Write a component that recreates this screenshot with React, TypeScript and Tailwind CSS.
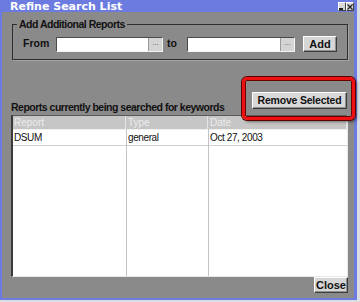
import React from "react";

const font = "font-['Liberation_Sans',Arial,sans-serif]";

function TitleButton({ kind }: { kind: "min" | "close" }) {
  return (
    <div className="w-[8px] h-[9px] bg-[#d8d8d8] border border-t-white border-l-white border-b-[#444] border-r-[#444] flex items-center justify-center">
      <svg width="6" height="6" viewBox="0 0 6 6">
        {kind === "min" ? (
          <rect x="0" y="4" width="4" height="2" fill="#222" />
        ) : (
          <path d="M0.5 0.5 L5.5 5.5 M5.5 0.5 L0.5 5.5" stroke="#222" strokeWidth="1.3" />
        )}
      </svg>
    </div>
  );
}

function Field({ w }: { w: string }) {
  return (
    <div className={`${w} h-[15px] bg-white border border-t-[#4a4a4a] border-l-[#4a4a4a] border-b-[#f4f4f4] border-r-[#f4f4f4] flex justify-end`}>
      <div className="w-[14px] h-full bg-[#d4d4d4] border-l border-[#9a9a9a] flex items-center justify-center text-[8px] leading-none text-[#555] pb-[2px]">
        ...
      </div>
    </div>
  );
}

function Btn({ label, w }: { label: string; w: string }) {
  return (
    <button className={`${w} h-[16px] bg-[#d6d6d6] border border-t-white border-l-white border-b-[#3c3c3c] border-r-[#3c3c3c] shadow-[inset_-1px_-1px_0_#909090] text-[11px] leading-none font-bold text-[#111] flex items-center justify-center`}>
      {label}
    </button>
  );
}

const columns = [
  { name: "Report", value: "DSUM", w: "w-[114px]" },
  { name: "Type", value: "general", w: "w-[82px]" },
  { name: "Date", value: "Oct 27, 2003", w: "flex-1" },
];

export default function App() {
  return (
    <div className={`w-[360px] h-[302px] bg-[#dcdce4] overflow-hidden ${font}`}>
      <div className="w-[357px] h-[300px] bg-[#6c7be0] pl-[2px] pr-[3px] pb-[2px] flex flex-col">
        {/* title bar */}
        <div className="h-[14px] flex items-center justify-between pl-[8px]">
          <span className="font-['DejaVu_Sans',sans-serif] text-[11px] leading-none font-bold text-white">
            Refine Search List
          </span>
          <div className="flex mt-[1px]">
            <TitleButton kind="min" />
            <TitleButton kind="close" />
          </div>
        </div>

        {/* body */}
        <div className="flex-1 bg-[#8b8a8b] flex flex-col pl-[9px] pr-[6px] pb-[5px]">
          <fieldset className="mt-[6px] ml-[1px] border border-[#2e2e2e] shadow-[1px_1px_0_#a4a4a4] pl-[10px] pt-[5px] pb-[7px]">
            <legend className="ml-[-6px] px-[2px] text-[10.5px] leading-[13px] font-bold tracking-[-0.5px] text-[#111]">
              Add Additional Reports
            </legend>
            <div className="flex items-center">
              <span className="w-[33px] text-[10.5px] font-bold text-[#111]">From</span>
              <Field w="w-[107px]" />
              <span className="w-[24px] pl-[4px] text-[10.5px] font-bold text-[#111]">to</span>
              <Field w="w-[108px]" />
              <div className="ml-[8px]">
                <Btn label="Add" w="w-[34px]" />
              </div>
            </div>
          </fieldset>

          <div className="mt-[27px] flex items-end justify-between">
            <span className="whitespace-nowrap text-[10.5px] leading-[13px] font-bold tracking-[-0.5px] text-[#111]">
              Reports currently being searched for keywords
            </span>
            <div className="relative mb-[3px] mr-[1px]">
              <button className="w-[95px] h-[17px] bg-[#d8d8d8] border border-t-white border-l-white border-b-[#3c3c3c] border-r-[#3c3c3c] shadow-[inset_-1px_-1px_0_#909090] text-[10.5px] tracking-[-0.2px] leading-none font-bold text-[#111]">
                Remove Selected
              </button>
              <div className="absolute z-10 left-[-10px] top-[-10px] right-[-8px] bottom-[-9px] rounded-[5px] border-[3px] border-[#ee1010] shadow-[0_0_0_1px_#5a0000,inset_0_0_0_1px_#6a0000,2px_2px_3px_rgba(0,0,0,0.45)] pointer-events-none" />
            </div>
          </div>

          {/* table */}
          <div className="mt-[1px] h-[162px] flex bg-white border-l-2 border-t border-b border-r border-l-[#3a3a3a] border-t-[#5a5a5a] border-b-[#e8e8e8] border-r-[#e8e8e8]">
            {columns.map((c, i) => (
              <div
                key={c.name}
                className={`${c.w} flex flex-col ${i < columns.length - 1 ? "border-r border-[#c4c4c4]" : ""}`}
              >
                <div className="h-[14px] bg-[#c6c6c6] border-b border-[#f0f0f0] border-r border-r-[#e4e4e4] pl-[1px] text-[10px] leading-[13px] text-[#ececec]">
                  {c.name}
                </div>
                <div className="h-[16px] border-b border-[#cfcfcf] pl-[1px] text-[10px] tracking-[-0.4px] leading-[15px] text-[#111]">
                  {c.value}
                </div>
                <div className="flex-1" />
              </div>
            ))}
          </div>

          <div className="flex-1 flex items-end justify-end">
            <Btn label="Close" w="w-[34px]" />
          </div>
        </div>
      </div>
    </div>
  );
}
